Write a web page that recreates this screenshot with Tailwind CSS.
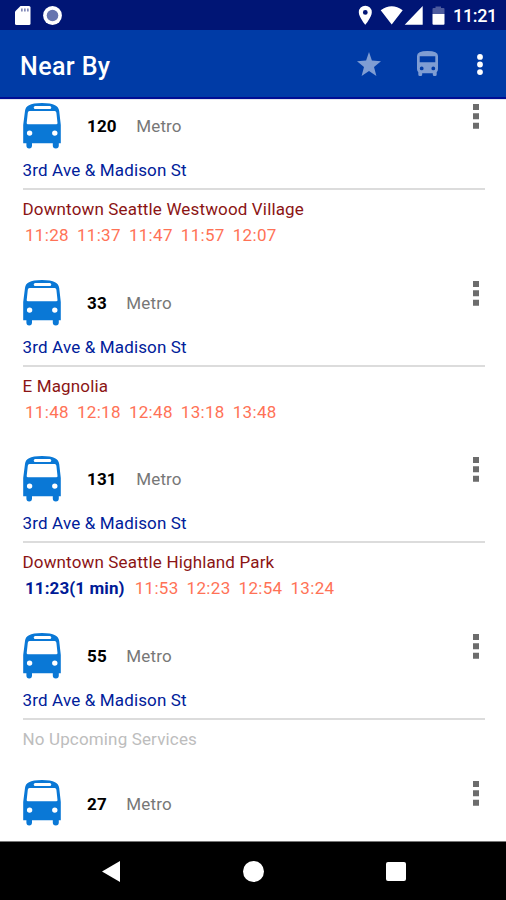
<!DOCTYPE html>
<html lang="en">
<head>
  <meta charset="UTF-8" />
  <meta name="viewport" content="width=device-width, initial-scale=1.0" />
  <title>Near By</title>
  <script src="https://cdn.jsdelivr.net/npm/@tailwindcss/browser@4"></script>
</head>
<body class="bg-white font-['Roboto',sans-serif] text-[17px] leading-[26px] tracking-[0.150px]">
  <!-- Shared icons -->
  <svg class="hidden">
    <symbol id="bus" viewBox="0 0 38 46">
      <path fill="#0a78d6" fill-rule="evenodd" d="M2 8Q2.300 4 6 2.200Q10 0 19 0Q28 0 32 2.200Q35.700 4 36.200 8L37.800 22V40.300H35.800V42.500Q35.800 45.400 32.800 45.400Q29.800 45.400 29.800 42.500V40.300H9V42.500Q9 45.400 6.200 45.400Q3.400 45.400 3.400 42.500V40.300H0.200V22ZM12.300 3Q10.700 3 10.700 4.500Q10.700 6 12.300 6H26.700Q28.300 6 28.300 4.500Q28.300 3 26.700 3ZM6.500 8Q5 8 4.800 9.700L3.700 20Q3.600 21.300 5 21.300H33.200Q34.600 21.300 34.500 20L33.400 9.700Q33.200 8 31.700 8ZM6.600 27.400A2.700 2.700 0 1 0 6.600 32.800A2.700 2.700 0 1 0 6.600 27.400ZM31.800 27.400A2.700 2.700 0 1 0 31.800 32.800A2.700 2.700 0 1 0 31.800 27.400Z" />
    </symbol>
    <symbol id="more" viewBox="0 0 6 25">
      <path fill="#6c6c6c" d="M0 0h6v6H0zM0 9.300h6v6H0zM0 18.700h6v6H0z" />
    </symbol>
  </svg>

  <div class="flex flex-col h-[900px] w-[506px] overflow-hidden">
    <!-- Status bar -->
    <div class="flex items-center justify-between h-[30px] shrink-0 bg-[#001575] pl-[15px] pr-[10px]">
      <div class="flex items-center gap-3">
        <svg class="w-4 h-[19px]" viewBox="0 0 16 19">
          <path fill="#fff" d="M5.500 0H14Q15.500 0 15.500 1.500V17.500Q15.500 19 14 19H1.500Q0 19 0 17.500V5.500Z" />
          <path fill="#8289b8" d="M6 2.500h1.700v3H6zM9 2.500h1.700v3H9zM12 2.500h1.700v3H12z" />
        </svg>
        <svg class="w-[19px] h-[19px]" viewBox="0 0 19 19">
          <circle cx="9.500" cy="9.500" r="9.400" fill="#fff" />
          <circle cx="9.500" cy="9.500" r="5.800" fill="#6674ae" />
        </svg>
      </div>
      <div class="flex items-center">
        <svg class="w-[87px] h-[20px] mr-2" viewBox="358 5 87 20">
          <path fill="#fff" fill-rule="evenodd" d="M365.300 5.700A6.500 6.500 0 0 0 358.800 12.200C358.800 17 365.300 24.800 365.300 24.800S371.800 17 371.800 12.200A6.500 6.500 0 0 0 365.300 5.700ZM365.300 10A2.400 2.400 0 1 1 365.300 14.800A2.400 2.400 0 1 1 365.300 10Z" />
          <path fill="#fff" d="M380.700 10.200Q391.700 2.500 402.700 10.200L391.700 24.500ZM422.700 6V24.700H404.700Z" />
          <path fill="#4d5b9e" d="M432.500 14V9Q432.500 8 433.500 8H435.500V6.500H441V8H443.500Q444.500 8 444.500 9V14Z" />
          <path fill="#fff" d="M432.500 14H444.500V23.700Q444.500 24.700 443.500 24.700H433.500Q432.500 24.700 432.500 23.700Z" />
        </svg>
        <span class="w-[43px] text-[18px] font-medium text-white tracking-[-0.350px] mt-px">11:21</span>
      </div>
    </div>

    <!-- App bar -->
    <header class="flex items-center h-[69px] shrink-0 bg-[#003ba6] border-b-2 border-[#000d94] pl-5 pr-[23px]">
      <h1 class="grow text-[25px] font-medium text-white tracking-[0.400px] mt-[6px]">Near By</h1>
      <svg class="w-6 h-6 mr-[36px]" viewBox="0 0 24 24">
        <path fill="#7f9dd3" d="M12 0l2.900 8.400L24 9.200l-7 5.700L19.400 24 12 19 4.600 24 7 14.900 0 9.200l9.100-.8z" />
      </svg>
      <svg class="w-[21px] h-[25px] mr-[39px]" viewBox="0 0 21 25">
        <path fill="#7f9dd3" fill-rule="evenodd" d="M0 5Q0 0 10.500 0T21 5V18Q21 20 19.700 21.200V23.500Q19.700 25 18.200 25H17.200Q15.800 25 15.800 23.500V22.300H5.200V23.500Q5.200 25 3.800 25H2.800Q1.300 25 1.300 23.500V21.200Q0 20 0 18ZM2.700 5.200V11.300H18.300V5.200ZM4.700 15.500A1.900 1.900 0 1 0 4.700 19.300A1.900 1.900 0 1 0 4.700 15.500ZM16.300 15.500A1.900 1.900 0 1 0 16.300 19.300A1.900 1.900 0 1 0 16.300 15.500Z" />
      </svg>
      <svg class="w-[6px] h-[21px] mt-[2px]" viewBox="0 0 6 21">
        <path fill="#fff" d="M3 0a2.900 2.900 0 1 1 0 5.800A2.900 2.900 0 1 1 3 0zM3 7.600a2.900 2.900 0 1 1 0 5.800A2.900 2.900 0 1 1 3 7.600zM3 15.200a2.900 2.900 0 1 1 0 5.800A2.900 2.900 0 1 1 3 15.200z" />
      </svg>
    </header>

    <!-- Services -->
    <main class="grow overflow-hidden border-t border-[#e4e4ec] pt-[3px] pl-[22.500px] pr-[21.500px]">
      <section class="h-[176.700px]">
        <div class="flex h-[46px]">
          <svg class="w-[38px] h-[46px]"><use href="#bus" /></svg>
          <b class="ml-[26.500px] mt-[10px] font-bold text-black">120</b>
          <span class="grow ml-[19.500px] mt-[10px] text-[#777]">Metro</span>
          <svg class="w-[6px] h-[25px] mr-[5.500px] mt-px"><use href="#more" /></svg>
        </div>
        <p class="mt-[8px] text-[#00209a]">3rd Ave &amp; Madison St</p>
        <hr class="mt-[5px] border-t-2 border-[#dcdcdc]" />
        <p class="mt-[6px] text-[#8b1414]">Downtown Seattle Westwood Village</p>
        <p class="flex gap-2 pl-[2.500px] text-[#ff7256] tracking-[0.320px]"><span>11:28</span><span>11:37</span><span>11:47</span><span>11:57</span><span>12:07</span></p>
      </section>

      <section class="h-[176.700px]">
        <div class="flex h-[46px]">
          <svg class="w-[38px] h-[46px]"><use href="#bus" /></svg>
          <b class="ml-[26.500px] mt-[10px] font-bold text-black">33</b>
          <span class="grow ml-[19.500px] mt-[10px] text-[#777]">Metro</span>
          <svg class="w-[6px] h-[25px] mr-[5.500px] mt-px"><use href="#more" /></svg>
        </div>
        <p class="mt-[8px] text-[#00209a]">3rd Ave &amp; Madison St</p>
        <hr class="mt-[5px] border-t-2 border-[#dcdcdc]" />
        <p class="mt-[6px] text-[#8b1414]">E Magnolia</p>
        <p class="flex gap-2 pl-[2.500px] text-[#ff7256] tracking-[0.320px]"><span>11:48</span><span>12:18</span><span>12:48</span><span>13:18</span><span>13:48</span></p>
      </section>

      <section class="h-[176.700px]">
        <div class="flex h-[46px]">
          <svg class="w-[38px] h-[46px]"><use href="#bus" /></svg>
          <b class="ml-[26.500px] mt-[10px] font-bold text-black">131</b>
          <span class="grow ml-[19.500px] mt-[10px] text-[#777]">Metro</span>
          <svg class="w-[6px] h-[25px] mr-[5.500px] mt-px"><use href="#more" /></svg>
        </div>
        <p class="mt-[8px] text-[#00209a]">3rd Ave &amp; Madison St</p>
        <hr class="mt-[5px] border-t-2 border-[#dcdcdc]" />
        <p class="mt-[6px] text-[#8b1414]">Downtown Seattle Highland Park</p>
        <p class="flex gap-2 pl-[2.500px] text-[#ff7256] tracking-[0.320px]"><b class="mr-[2px] font-bold tracking-[0.100px] text-[#001a96]">11:23(1 min)</b><span>11:53</span><span>12:23</span><span>12:54</span><span>13:24</span></p>
      </section>

      <section class="h-[147.400px]">
        <div class="flex h-[46px]">
          <svg class="w-[38px] h-[46px]"><use href="#bus" /></svg>
          <b class="ml-[26.500px] mt-[10px] font-bold text-black">55</b>
          <span class="grow ml-[19.500px] mt-[10px] text-[#777]">Metro</span>
          <svg class="w-[6px] h-[25px] mr-[5.500px] mt-px"><use href="#more" /></svg>
        </div>
        <p class="mt-[8px] text-[#00209a]">3rd Ave &amp; Madison St</p>
        <hr class="mt-[5px] border-t-2 border-[#dcdcdc]" />
        <p class="mt-[6px] text-[#bdbdbd]">No Upcoming Services</p>
      </section>

      <section>
        <div class="flex h-[46px]">
          <svg class="w-[38px] h-[46px]"><use href="#bus" /></svg>
          <b class="ml-[26.500px] mt-[11px] font-bold text-black">27</b>
          <span class="grow ml-[19.500px] mt-[11px] text-[#777]">Metro</span>
          <svg class="w-[6px] h-[25px] mr-[5.500px] mt-px"><use href="#more" /></svg>
        </div>
      </section>
    </main>

    <!-- Navigation bar -->
    <nav class="flex items-center h-[59px] shrink-0 bg-black border-t border-[#777] pl-[102px] pr-[100px] justify-between">
      <svg class="w-[18px] h-[21px]" viewBox="0 0 18 21"><path fill="#fff" d="M18 0v21L0 10.500z" /></svg>
      <div class="w-[21px] h-[21px] ml-px rounded-full bg-white"></div>
      <div class="w-[20px] h-[19px] rounded-[2px] bg-white"></div>
    </nav>
  </div>
</body>
</html>
